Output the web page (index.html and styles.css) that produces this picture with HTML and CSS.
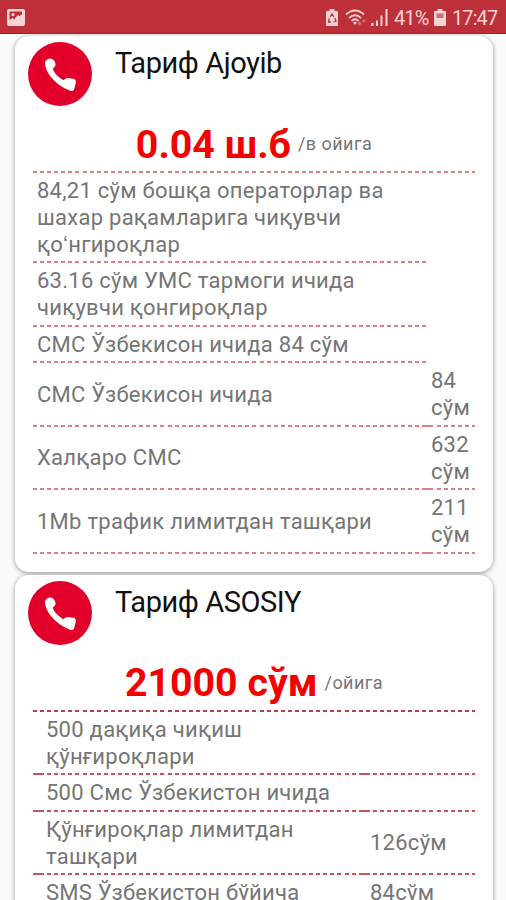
FILE: index.html
```html
<!DOCTYPE html>
<html lang="uz">
<head>
  <meta charset="UTF-8">
  <meta name="viewport" content="width=device-width, initial-scale=1">
  <title>Тарифлар</title>
  <link rel="stylesheet" href="styles.css">
</head>
<body>

<div class="status-bar">
  <svg class="icon-picture" viewBox="0 0 18 17">
    <path fill="#f6d4d4" fill-rule="evenodd" d="M2 0h14q2 0 2 2v13q0 2-2 2H2q-2 0-2-2V2Q0 0 2 0zM2.500 2.500v8.500l3-2 3 2 3.500-3 3 2.500V2.500z"/>
    <circle cx="6" cy="5.500" r="1.600" fill="#f6d4d4"/>
    <path fill="#f6d4d4" d="M8 9l3-3 1.500 1 3-2v7H8z"/>
  </svg>
  <div class="status-right">
    <svg class="icon-recycle" viewBox="0 0 12 17">
      <path fill="#f6d4d4" d="M3.500 0h5v2H11q1 0 1 1v13q0 1-1 1H1q-1 0-1-1V3q0-1 1-1h2.500z"/>
      <path fill="none" stroke="#bd3039" stroke-width="1.300" d="M4 8l2-3 2 3M9 9l1 3-2.500 1M5 13H2.500L3 9.500"/>
    </svg>
    <svg class="icon-wifi" viewBox="0 0 22 18">
      <g fill="none" stroke="#f6d4d4" stroke-width="1.700">
        <path d="M1 5.500q9-8 18 0"/>
        <path d="M4 9q6-5.500 12 0"/>
        <path d="M6.500 12q3.500-3.500 7 0"/>
      </g>
      <path fill="#f6d4d4" d="M8 13.500q2-1.500 4 0L10 16z"/>
      <path fill="#e0656c" d="M12.500 14.500l2-2.500 2 2.500-2 2.500zM17 12l2-2 2 2-2 2z"/>
    </svg>
    <svg class="icon-signal" viewBox="0 0 17 17">
      <path fill="#f6d4d4" d="M0 14h2.500v3H0zM5 11.500h2V17H5zM9.500 6.500h2V17h-2zM14.500 0h2v17h-2z"/>
    </svg>
    <span class="percent">41%</span>
    <svg class="icon-battery" viewBox="0 0 12 17">
      <path fill="#f6d4d4" d="M3.500 0h5v2H11q1 0 1 1v13q0 1-1 1H1q-1 0-1-1V3q0-1 1-1h2.500z"/>
      <path fill="#cf6b72" d="M2.500 4.500h7V9h-7z"/>
    </svg>
    <span class="clock">17:47</span>
  </div>
</div>

<div class="tariffs">
  <div class="card">
    <div class="card-header">
      <svg class="phone" viewBox="0 0 64 64">
        <circle cx="32" cy="32" r="32" fill="#e2002b"/>
        <path fill="#fff" d="M17 20Q19 16.300 22.500 16.500Q26 17 27.500 21.500Q28 24.500 24.700 26.500Q26 32.500 35.300 38.300Q38.500 35.500 41.500 36.200L46.500 37Q48.500 38.300 47.800 41L46 47.500Q45 49.800 42 48.800Q30 44 22.500 34.500Q17 27.500 17 20z"/>
      </svg>
      <h2>Тариф Ajoyib</h2>
    </div>
    <div class="price"><span class="amount">0.04 ш.б</span><span class="period">/в ойига</span></div>
    <div class="row narrow"><span class="name">84,21 сўм бошқа операторлар ва<br>шахар рақамларига чиқувчи<br>қоʻнгироқлар</span></div>
    <div class="row narrow"><span class="name">63.16 сўм УМС тармоги ичида<br>чиқувчи қонгироқлар</span></div>
    <div class="row narrow"><span class="name">СМС Ўзбекисон ичида 84 сўм</span></div>
    <div class="row split"><span class="name">СМС Ўзбекисон ичида</span><span class="value">84<br>сўм</span></div>
    <div class="row split"><span class="name">Халқаро СМС</span><span class="value">632<br>сўм</span></div>
    <div class="row split"><span class="name">1Mb трафик лимитдан ташқари</span><span class="value">211<br>сўм</span></div>
  </div>

  <div class="card wide-values">
    <div class="card-header">
      <svg class="phone" viewBox="0 0 64 64">
        <circle cx="32" cy="32" r="32" fill="#e2002b"/>
        <path fill="#fff" d="M17 20Q19 16.300 22.500 16.500Q26 17 27.500 21.500Q28 24.500 24.700 26.500Q26 32.500 35.300 38.300Q38.500 35.500 41.500 36.200L46.500 37Q48.500 38.300 47.800 41L46 47.500Q45 49.800 42 48.800Q30 44 22.500 34.500Q17 27.500 17 20z"/>
      </svg>
      <h2>Тариф ASOSIY</h2>
    </div>
    <div class="price"><span class="amount">21000 сўм</span><span class="period">/ойига</span></div>
    <div class="row"><span class="name">500 дақиқа чиқиш<br>қўнғироқлари</span><span class="value"></span></div>
    <div class="row"><span class="name">500 Смс Ўзбекистон ичида</span><span class="value"></span></div>
    <div class="row"><span class="name">Қўнғироқлар лимитдан<br>ташқари</span><span class="value">126сўм</span></div>
    <div class="row"><span class="name">SMS Ўзбекистон бўйича</span><span class="value">84сўм</span></div>
  </div>
</div>

</body>
</html>
```
FILE: styles.css
```css
* { box-sizing: border-box; }
body {
  margin: 0;
  height: 900px;
  overflow: hidden;
  background: #fafafa;
  font-family: Roboto, sans-serif;
  color: #757575;
}
.status-bar {
  display: flex;
  align-items: center;
  justify-content: space-between;
  height: 34px;
  padding: 2px 8px 0 7px;
  background: #bd3039;
  border-bottom: 1px solid #b9151b;
  color: #f6d4d4;
  font-size: 20px;
}
.status-right { display: flex; align-items: center; }
.icon-picture { width: 18px; height: 17px; }
.icon-recycle { width: 12px; height: 17px; margin-right: 7px; }
.icon-wifi { width: 22px; height: 18px; margin-right: 4px; }
.icon-signal { width: 17px; height: 17px; margin-right: 6px; }
.icon-battery { width: 12px; height: 17px; margin: 0 6px 0 6px; }
.percent { width: 34px; letter-spacing: -0.9px; white-space: nowrap; }
.clock { width: 46px; letter-spacing: -0.9px; white-space: nowrap; }

.tariffs {
  display: flex;
  flex-direction: column;
  gap: 3px;
  height: 866px;
  overflow: hidden;
  padding: 2px 13px 0 15px;
}
.card {
  flex: none;
  height: 535.5px;
  padding: 6px 18px 0;
  border-radius: 14px;
  background: #fff;
  box-shadow: 0 1px 5px rgba(0, 0, 0, 0.4);
}
.card-header {
  display: flex;
  gap: 23px;
  margin-left: -5px;
  height: 74px;
}
.phone { width: 64px; height: 64px; flex: none; }
h2 {
  margin: 4px 0 0;
  color: #111;
  font-size: 29px;
  font-weight: 400;
  line-height: 34px;
  letter-spacing: -0.42px;
  white-space: nowrap;
}
.price {
  display: flex;
  align-items: center;
  justify-content: center;
  gap: 7px;
  height: 57.300px;
  padding-bottom: 2px;
  white-space: nowrap;
}
.amount {
  padding-top: 2px;
  color: #f40000;
  font-size: 39.300px;
  line-height: 52px;
  font-weight: 700;
}
.period { font-size: 18px; letter-spacing: 0.45px; }

/* dashed rule under every line of the tariff */
.price, .row {
  background: repeating-linear-gradient(90deg, #dc8086 0 4px, transparent 4px 7.080px) left bottom / 100% 2px no-repeat;
}
.row {
  display: flex;
  align-items: center;
  padding: 5px 0 4.800px 4px;
  font-size: 22px;
  line-height: 26.800px;
  letter-spacing: 0.26px;
  white-space: nowrap;
}
.narrow { width: 394px; }
.name { flex: 1; }
.value { width: 44px; }
.wide-values .row { padding-left: 13px; }
.wide-values .value { width: 105px; }

/* dashes of neighbouring cells run together where they meet */
.split {
  background:
    linear-gradient(#dc8086, #dc8086) 390px 100% / 7px 2px no-repeat,
    repeating-linear-gradient(90deg, #dc8086 0 4px, transparent 4px 7.080px) left bottom / 100% 2px no-repeat;
}
.wide-values .row {
  background:
    linear-gradient(#c9525b, #c9525b) 0 100% / 11px 2px no-repeat,
    linear-gradient(#c9525b, #c9525b) 330px 100% / 7px 2px no-repeat,
    repeating-linear-gradient(90deg, #c9525b 0 4px, transparent 4px 7.080px) left bottom / 100% 2px no-repeat;
}
.wide-values .price {
  background: repeating-linear-gradient(90deg, #b8424c 0 4px, transparent 4px 7.080px) left bottom / 100% 2px no-repeat;
}
```
